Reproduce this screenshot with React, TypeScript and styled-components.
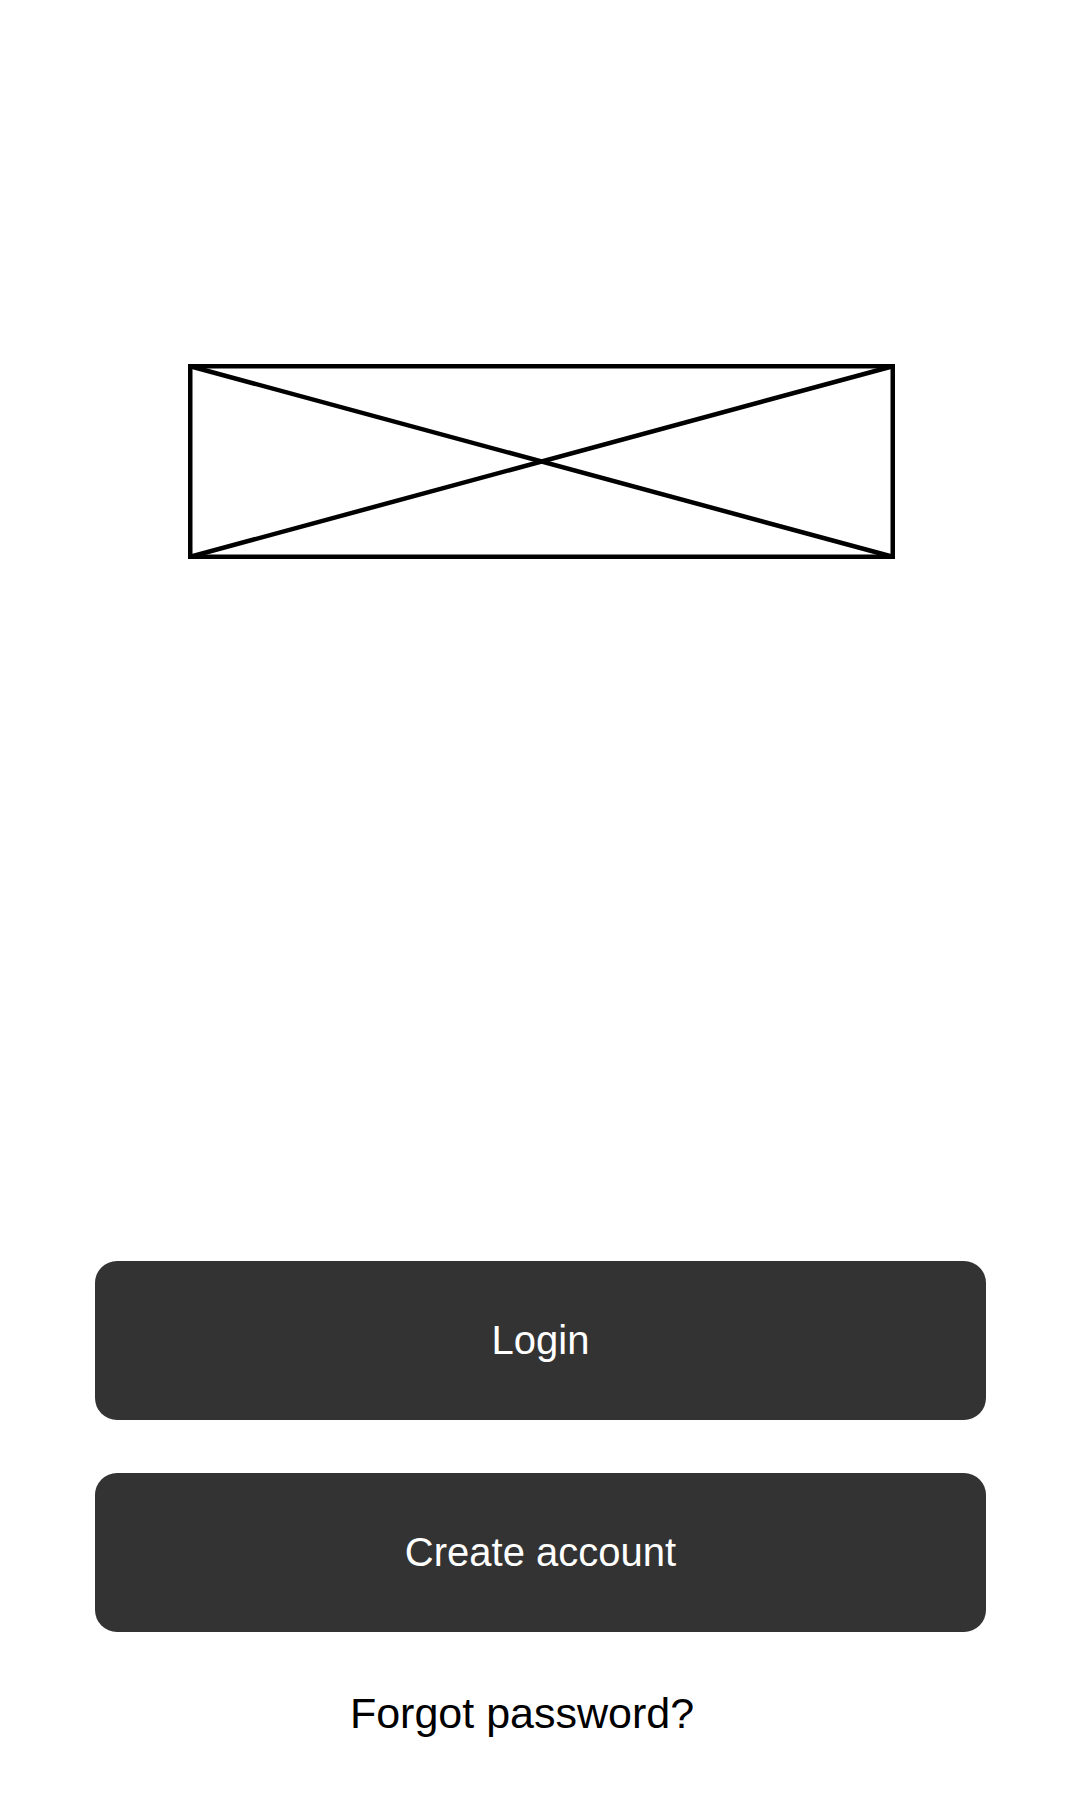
import React from "react";
import styled, { createGlobalStyle } from "styled-components";

const GlobalStyle = createGlobalStyle`
  html, body {
    margin: 0;
    padding: 0;
    background: #fff;
  }
  body {
    font-family: "Liberation Sans", Arial, sans-serif;
  }
`;

const Screen = styled.div`
  width: 1080px;
  min-height: 1800px;
  display: flex;
  flex-flow: column;
  align-items: center;
  box-sizing: border-box;
  padding-top: 364px;
  background: #fff;
`;

const LogoBox = styled.svg`
  display: block;
  width: 707px;
  height: 195px;
  margin-left: 2px;
`;

const Spacer = styled.div`
  flex-grow: 1;
`;

const Actions = styled.div`
  width: 891px;
  display: flex;
  flex-flow: column;
  gap: 53px;
  margin-left: 1px;
`;

const Button = styled.button`
  height: 159px;
  width: 100%;
  border: none;
  border-radius: 22px;
  background-color: #333333;
  color: #fff;
  font-family: "Liberation Sans", Arial, sans-serif;
  font-size: 40px;
  cursor: pointer;
  display: flex;
  align-items: center;
  justify-content: center;
`;

const ForgotLink = styled.a`
  margin: 57px 36px 62px 0;
  font-size: 43px;
  line-height: 1.15;
  color: #000;
  cursor: pointer;
`;

const Placeholder = () => (
  <LogoBox viewBox="0 0 707 195">
    <g stroke="#000" strokeWidth="4.5" fill="none" strokeLinecap="round">
      <rect x="2.25" y="2.25" width="702.5" height="190.5" />
      <line x1="2.25" y1="2.25" x2="704.75" y2="192.75" />
      <line x1="2.25" y1="192.75" x2="704.75" y2="2.25" />
    </g>
  </LogoBox>
);

const App = () => (
  <>
    <GlobalStyle />
    <Screen>
      <Placeholder />
      <Spacer />
      <Actions>
        <Button>Login</Button>
        <Button>Create account</Button>
      </Actions>
      <ForgotLink>Forgot password?</ForgotLink>
    </Screen>
  </>
);

export default App;
